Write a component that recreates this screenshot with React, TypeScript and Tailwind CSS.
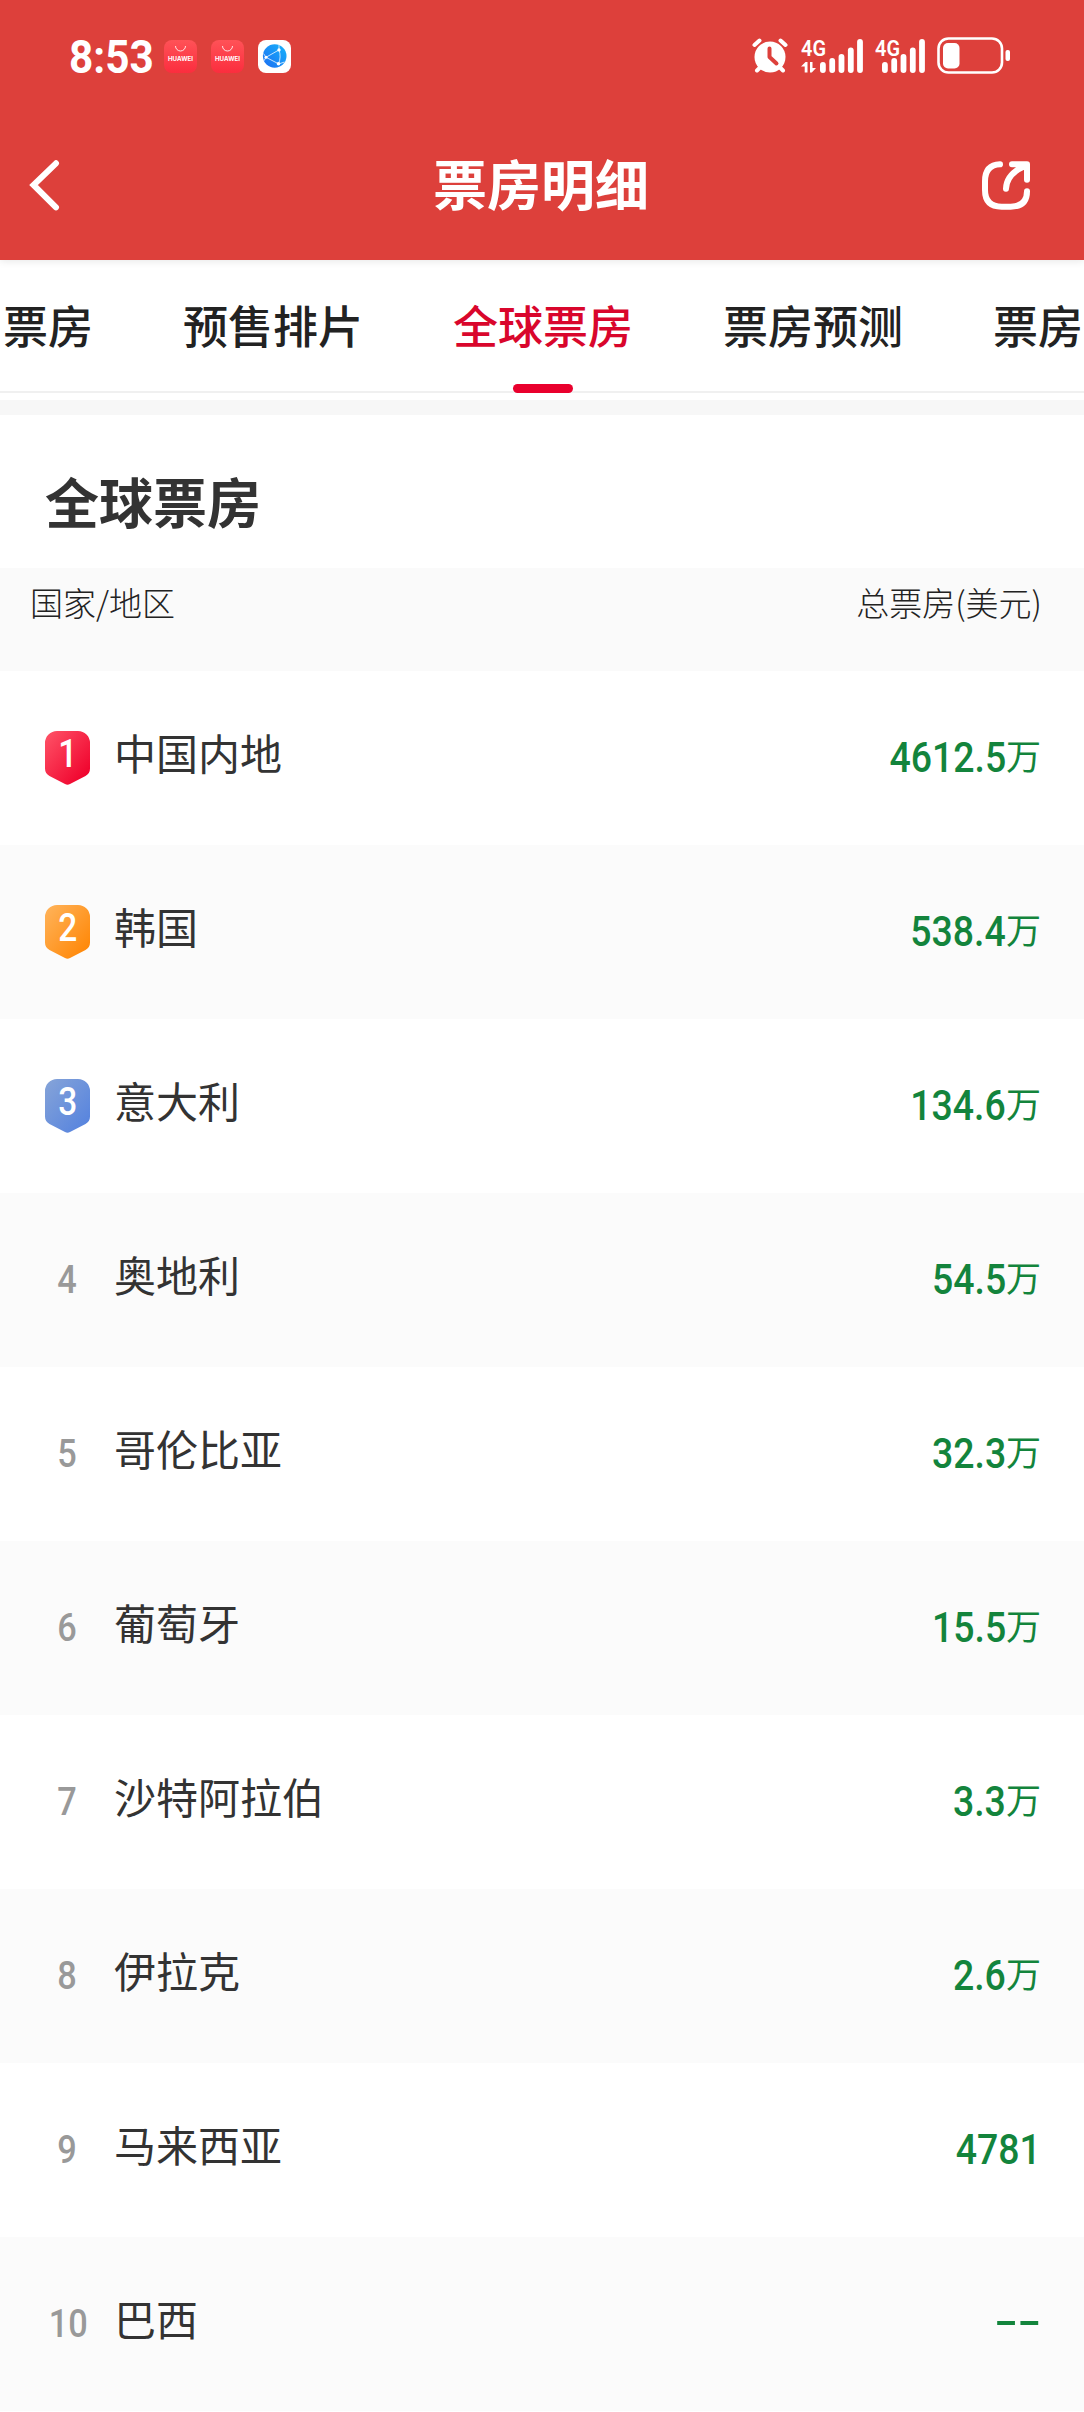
import clsx from "clsx";

const tabs = [
  { id: "prev", label: "票房" },
  { id: "presale", label: "预售排片" },
  { id: "global", label: "全球票房" },
  { id: "forecast", label: "票房预测" },
  { id: "next", label: "票房" },
];
const activeTab = "global";

const rows = [
  { rank: 1, name: "中国内地", value: "4612.5", unit: "万" },
  { rank: 2, name: "韩国", value: "538.4", unit: "万" },
  { rank: 3, name: "意大利", value: "134.6", unit: "万" },
  { rank: 4, name: "奥地利", value: "54.5", unit: "万" },
  { rank: 5, name: "哥伦比亚", value: "32.3", unit: "万" },
  { rank: 6, name: "葡萄牙", value: "15.5", unit: "万" },
  { rank: 7, name: "沙特阿拉伯", value: "3.3", unit: "万" },
  { rank: 8, name: "伊拉克", value: "2.6", unit: "万" },
  { rank: 9, name: "马来西亚", value: "4781", unit: "" },
  { rank: 10, name: "巴西", value: "--", unit: "" },
];

const badgeColors = [
  ["#ff5468", "#f0062f"],
  ["#ffb45c", "#ff8a0c"],
  ["#86a4d8", "#5a86de"],
];

function StoreIcon() {
  return (
    <svg width="33" height="33" viewBox="0 0 33 33">
      <defs>
        <linearGradient id="store" x1="0" y1="0" x2="0" y2="1">
          <stop offset="0" stopColor="#ff5257" />
          <stop offset="1" stopColor="#fb2d3e" />
        </linearGradient>
      </defs>
      <rect width="33" height="33" rx="8" fill="url(#store)" />
      <path d="M11.5 6a5 5 0 0 0 10 0" fill="none" stroke="#fff" strokeOpacity="0.85" strokeWidth="1" />
      <text x="4" y="21" fontSize="5.6" fontWeight="700" fill="#fff" textLength="25" lengthAdjust="spacingAndGlyphs" className="font-['Inter',sans-serif]">
        HUAWEI
      </text>
    </svg>
  );
}

function BrowserIcon() {
  return (
    <svg width="33" height="33" viewBox="0 0 33 33">
      <defs>
        <linearGradient id="globe" x1="1" y1="0" x2="0" y2="1">
          <stop offset="0" stopColor="#16b4fb" />
          <stop offset="1" stopColor="#1e6df2" />
        </linearGradient>
      </defs>
      <rect width="33" height="33" rx="8" fill="#fff" />
      <circle cx="16.7" cy="16" r="11.8" fill="url(#globe)" />
      <g fill="none" stroke="#fff" strokeOpacity="0.75" strokeWidth="1">
        <path d="M21 4.9v5L8 17.3l12.5 6.5" />
        <path d="M21 9.9c1.6 4.5 1.5 9.5-.5 14" />
        <path d="M5.5 13.5 8 17.3l-2 3.5M20.5 24l6-2" />
      </g>
      <g fill="#fff">
        <circle cx="21" cy="9.9" r="1.7" />
        <circle cx="8" cy="17.3" r="1.5" />
        <circle cx="20.5" cy="23.8" r="1.8" />
      </g>
    </svg>
  );
}

function AlarmIcon() {
  return (
    <svg width="37" height="36" viewBox="0 0 37 36">
      <circle cx="18" cy="19" r="15.5" fill="#fff" />
      <g fill="none" stroke="#fff" strokeWidth="4" strokeLinecap="round">
        <path d="M2.5 7 7.5 2.5M33.5 7 28.5 2.5M5 32.5l4-4M31 32.5l-4-4" />
      </g>
      <path d="M17.5 10.5v8.5l7 6.5" fill="none" stroke="#dd403b" strokeWidth="4" strokeLinecap="round" strokeLinejoin="round" />
    </svg>
  );
}

const bars = [
  { x: 0, top: 24 },
  { x: 9.3, top: 20 },
  { x: 18.6, top: 16 },
  { x: 27.9, top: 9.5 },
  { x: 37.1, top: 1 },
];

function Signal({ data }: { data?: boolean }) {
  const left = data ? 19 : 7;
  const width = data ? 62 : 50;
  return (
    <svg width={width} height="44" viewBox={`0 -4 ${width} 44`} fill="#fff">
      <text x="0" y="17.7" fontSize="22.5" fontWeight="600" textLength="25" lengthAdjust="spacingAndGlyphs" className="font-['Roboto',sans-serif]">
        4G
      </text>
      {data && <path d="M0 28.5 4.5 24h2v10.5H3.7V28.5zM9 24h2.5v6H15l-4.2 4.5H9z" />}
      {bars.map((b) => (
        <rect key={b.x} x={left + b.x} y={b.top} width="5.8" height={35 - b.top} rx="2.9" />
      ))}
    </svg>
  );
}

function BatteryIcon() {
  return (
    <svg width="74" height="38" viewBox="0 0 74 38">
      <rect x="1.5" y="1.5" width="63.5" height="34" rx="10" fill="none" stroke="#fff" strokeWidth="2.6" />
      <rect x="6" y="6" width="16.5" height="25.5" rx="5" fill="#fff" />
      <rect x="68.5" y="13" width="4.5" height="11" rx="2" fill="#fff" />
    </svg>
  );
}

function StatusBar() {
  return (
    <div className="flex h-[112px] items-center justify-between pr-[73px] pl-[69px]">
      <div className="flex items-center gap-[14px] pt-px">
        <span className="w-[81px] font-['Roboto',sans-serif] text-[46px] leading-none font-bold">
          <span className="inline-block origin-left scale-x-[0.92]">8:53</span>
        </span>
        <StoreIcon />
        <StoreIcon />
        <BrowserIcon />
      </div>
      <div className="flex items-center gap-[12px]">
        <AlarmIcon />
        <Signal data />
        <Signal />
        <BatteryIcon />
      </div>
    </div>
  );
}

function RankBadge({ rank }: { rank: number }) {
  const [from, to] = badgeColors[rank - 1];
  return (
    <svg width="45" height="54" viewBox="0 0 45 54">
      <defs>
        <linearGradient id={`badge-${rank}`} x1="0" y1="0" x2="1" y2="1">
          <stop offset="0" stopColor={from} />
          <stop offset="0.85" stopColor={to} />
        </linearGradient>
      </defs>
      <path
        d="M12 0h21a12 12 0 0 1 12 12v25.5q0 5-4.5 7.5L25 53q-2.500 1.400-5 0L4.500 45Q0 42.500 0 37.500V12A12 12 0 0 1 12 0z"
        fill={`url(#badge-${rank})`}
      />
      <text x="13.3" y="36" fontSize="39" fontWeight="500" fill="#fff" textLength="19" lengthAdjust="spacingAndGlyphs" className="font-['Roboto',sans-serif]">
        {rank}
      </text>
    </svg>
  );
}

export default function App() {
  return (
    <div className="h-[2412px] w-[1084px] overflow-hidden bg-white font-['Noto_Sans_CJK_SC',sans-serif] text-[#333]">
      <header className="relative h-[260px] bg-[#dd403b] text-white shadow-[0_1px_8px_rgba(0,0,0,0.1)]">
        <StatusBar />
        <div className="flex h-[146px] items-center justify-between pr-[51px] pl-[29px]">
          <svg width="53" height="52" viewBox="0 0 53 52" fill="none" stroke="#fff" strokeWidth="6" strokeLinecap="round" strokeLinejoin="miter">
            <path d="M27 4.3 4.5 26 27 48.3" />
          </svg>
          <h1 className="-mt-[4px] ml-[20px] text-[54px] leading-none font-bold">票房明细</h1>
          <svg width="53" height="53" viewBox="60 55 159 159" fill="none" stroke="#fff" strokeWidth="18" strokeLinecap="round" strokeLinejoin="round">
            <path d="M120 71Q75 73 75 122V148Q75 198 125 198H152Q201 198 201 152" />
            <path d="M156 71H201V117M138 144C139 112 162 90 196 75" />
          </svg>
        </div>
      </header>

      <nav className="flex h-[133px] justify-center border-b-2 border-[#f0f0f0]">
        <div className="flex shrink-0 gap-[90px] pl-[2px]">
          {tabs.map((tab) => (
            <div
              key={tab.id}
              className={clsx(
                "flex shrink-0 flex-col items-center justify-between text-[45px] font-medium whitespace-nowrap",
                tab.label.length === 2 ? "w-[90px]" : "w-[180px]",
                tab.id === activeTab ? "text-[#d9062c]" : "text-[#222]"
              )}
            >
              <span className="pt-[42px] leading-[45px]">{tab.label}</span>
              {tab.id === activeTab && <span className="-mb-[2px] h-[9px] w-[60px] rounded-full bg-[#e9002d]" />}
            </div>
          ))}
        </div>
      </nav>
      <div className="mt-[7px] h-[15px] bg-[#f7f7f7]" />

      <section>
        <h2 className="flex h-[153px] items-center pt-[19px] pl-[45px] text-[54px] leading-none font-bold">全球票房</h2>
        <div className="flex h-[103px] justify-between bg-[#fafafa] pt-[18px] pr-[42px] pl-[30px] text-[33px] leading-[33px] font-light text-[#222]">
          <span>国家/地区</span>
          <span>总票房(美元)</span>
        </div>

        {rows.map((row) => (
          <div key={row.rank} className={clsx("flex h-[174px] items-center pr-[43px] pl-[37px]", row.rank % 2 === 0 && "bg-[#fbfbfb]")}>
            <div className="flex w-[60px] justify-center font-['Roboto',sans-serif] text-[39px] leading-none font-medium text-[#999]">
              {row.rank <= 3 ? (
                <RankBadge rank={row.rank} />
              ) : (
                <span className={clsx("inline-block scale-x-[0.88]", row.rank === 10 ? "ml-[3px]" : "ml-px")}>{row.rank}</span>
              )}
            </div>
            <span className="-mt-[12px] ml-[17px] text-[42px] leading-none">{row.name}</span>
            <div className="-mt-px ml-auto flex items-center text-[#13843c]">
              <span
                className={clsx(
                  "inline-block origin-right font-['Roboto',sans-serif] text-[43px] leading-none font-medium",
                  row.value === "--" ? "-mt-[4px] scale-x-[1.6]" : "scale-x-[0.87]"
                )}
              >
                {row.value}
              </span>
              <span className="-mt-[6px] text-[35px] leading-none">{row.unit}</span>
            </div>
          </div>
        ))}
      </section>
    </div>
  );
}
